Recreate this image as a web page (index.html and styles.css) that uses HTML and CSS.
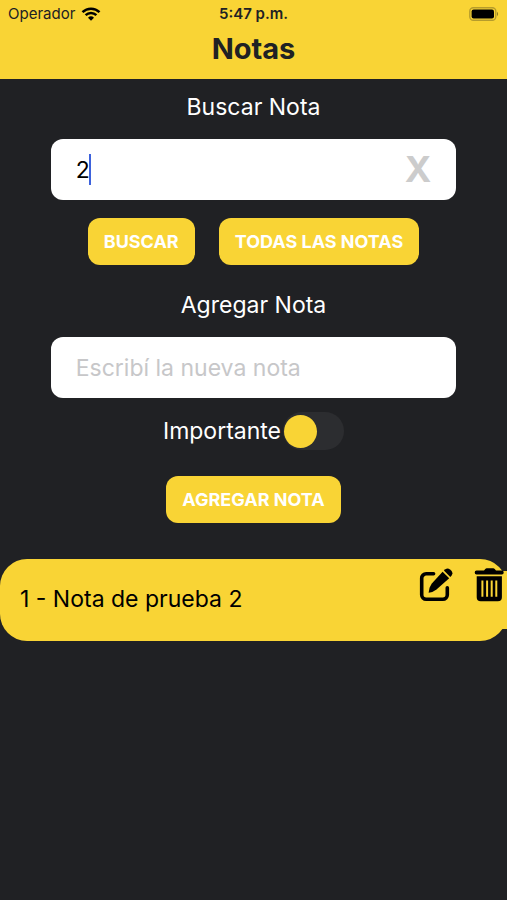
FILE: index.html
```html
<!DOCTYPE html>
<html lang="es">
<head>
<meta charset="utf-8">
<meta name="viewport" content="width=device-width, initial-scale=1">
<title>Notas</title>
<link rel="stylesheet" href="styles.css">
</head>
<body>
<header class="header">
  <div class="status">
    <div class="carrier">
      <span>Operador</span>
      <svg class="wifi" viewBox="0 0 20 14" aria-hidden="true">
        <path d="M1.5 5.2a12.2 12.2 0 0 1 17 0M4.6 8.2a7.8 7.8 0 0 1 10.8 0" fill="none" stroke="currentColor" stroke-width="2.5"/>
        <path d="M7 10.7a4.3 4.3 0 0 1 6 0L10 13.8z" fill="currentColor"/>
      </svg>
    </div>
    <time class="clock">5:47 p.m.</time>
    <svg class="battery" viewBox="0 0 30 14" aria-hidden="true">
      <rect x="0.8" y="0.8" width="26" height="12.4" rx="3.5" fill="none" stroke="#b69c2c" stroke-width="1.4"/>
      <rect x="2.6" y="2.5" width="22.4" height="9" rx="2" fill="#000"/>
      <path d="M28 4.8q2.2 2.2 0 4.4z" fill="#8e7a24"/>
    </svg>
  </div>
  <h1 class="title">Notas</h1>
</header>
<main>
  <form class="form">
    <label class="label" for="search">Buscar Nota</label>
    <div class="field">
      <input class="input" id="search" type="text" value="2">
      <span class="caret"></span>
      <button class="clear" type="button" aria-label="Borrar búsqueda">X</button>
    </div>
    <div class="actions">
      <button class="button" type="button">BUSCAR</button>
      <button class="button" type="button">TODAS LAS NOTAS</button>
    </div>
  </form>
  <form class="form form-add">
    <label class="label" for="note">Agregar Nota</label>
    <div class="field">
      <input class="input" id="note" type="text" placeholder="Escribí la nueva nota">
    </div>
    <div class="important">
      <label for="important">Importante</label>
      <input class="switch" id="important" type="checkbox" role="switch">
    </div>
    <button class="button" type="button">AGREGAR NOTA</button>
  </form>
  <ul class="notes">
    <li class="note">
      <p class="note-text">1 - Nota de prueba 2</p>
      <button class="icon-button" type="button" aria-label="Editar nota">
        <svg class="icon" viewBox="0 0 34 34" aria-hidden="true">
          <path d="M14.6 5.8H7.2a4.5 4.5 0 0 0-4.5 4.5v16.4a4.5 4.5 0 0 0 4.5 4.5h16.6a4.5 4.5 0 0 0 4.5-4.5V19.8" fill="none" stroke="currentColor" stroke-width="3.6" stroke-linecap="round"/>
          <path d="M23.6 3.7 30.2 10.3 17.5 21.6Q14.5 24.2 9.6 24.8 10 19.4 12.6 15.7z" fill="currentColor"/>
          <path d="M24.9 2.5 26.4 1.2q2.2-1.7 4.6.2l1.4 1.4q1.9 2.3.2 4.6L31.3 9z" fill="currentColor"/>
        </svg>
      </button>
      <button class="icon-button icon-button-delete" type="button" aria-label="Eliminar nota">
        <svg class="icon" viewBox="0 0 34 34" aria-hidden="true">
          <path d="M3.5 2.5H11l1.3-1.6Q12.9.2 13.8.2h6.4q.9 0 1.5.7L23 2.5h5.9q1.8 0 1.8 2t-1.8 2H3.5q-1.8 0-1.8-2t1.8-2z" fill="currentColor"/>
          <path fill-rule="evenodd" d="M3.7 8.3h25.2v21q0 4-4 4H7.7q-4 0-4-4zM8.4 12.6v16.2h2V12.6zM13.1 12.6v16.2h2V12.6zM17.7 12.6v16.2h2V12.6zM22.3 12.6v16.2h2V12.6z" fill="currentColor"/>
        </svg>
      </button>
    </li>
  </ul>
</main>
</body>
</html>
```
FILE: styles.css
```css
* {
  box-sizing: border-box;
}

body {
  margin: 0;
  min-height: 100vh;
  background: #202124;
  color: #fff;
  font: 23px/32px Inter, "Liberation Sans", sans-serif;
  overflow-x: hidden;
}

button,
input {
  font: inherit;
  margin: 0;
}

button {
  border: 0;
  cursor: pointer;
}

.header {
  padding: 4px 8px 12px;
  background: #f9d435;
  color: #202124;
}

.status {
  display: grid;
  grid-template-columns: 1fr auto 1fr;
  align-items: center;
  font-size: 14px;
  line-height: 20px;
}

.carrier {
  display: flex;
  align-items: center;
  gap: 6px;
  font-size: 15px;
}

.wifi {
  width: 20px;
  height: 14px;
  color: #000;
}

.clock {
  font-size: 15px;
  font-weight: 600;
}

.battery {
  width: 30px;
  height: 14px;
  justify-self: end;
}

.title {
  margin: 7px 0 0;
  font-size: 29px;
  line-height: 36px;
  font-weight: 700;
  text-align: center;
}

.form {
  display: flex;
  flex-direction: column;
  align-items: center;
  padding-top: 12px;
}

.form-add {
  padding-top: 24px;
}

.label {
  margin-bottom: 16px;
}

.field {
  position: relative;
  width: 80%;
}

.input {
  display: block;
  width: 100%;
  height: 61px;
  padding: 0 25px;
  border: 0;
  border-radius: 12px;
  background: #fff;
  color: #000;
  outline: 0;
}

.input::placeholder {
  color: #c7c7c9;
  opacity: 1;
}

.caret {
  position: absolute;
  top: 15px;
  left: 38px;
  width: 2px;
  height: 31px;
  background: #3d62dc;
}

.clear {
  position: absolute;
  top: 8px;
  right: 19px;
  padding: 6px;
  background: none;
  color: #ccc;
  font-size: 36px;
  font-weight: 700;
}

.actions {
  display: flex;
  gap: 24px;
  margin-top: 18px;
}

.button {
  height: 47px;
  padding: 0 16px;
  border-radius: 12px;
  background: #f9d435;
  color: #fff;
  font-size: 18px;
  font-weight: 700;
}

.important {
  display: flex;
  align-items: center;
  gap: 2px;
  margin: 14px 0 26px;
}

.switch {
  appearance: none;
  display: flex;
  align-items: center;
  width: 61px;
  height: 38px;
  padding: 0 1px;
  border-radius: 19px;
  background: #2c2d30;
}

.switch::before {
  content: "";
  width: 33px;
  height: 33px;
  border-radius: 50%;
  background: #f9d435;
}

.switch:checked {
  justify-content: flex-end;
}

.notes {
  margin: 36px 0 0;
  padding: 0;
  list-style: none;
}

.note {
  display: flex;
  align-items: flex-start;
  gap: 20px;
  min-height: 82px;
  padding: 9px 0 11px 20px;
  border-radius: 27px;
  background: #f9d435;
  color: #000;
}

.note-text {
  flex: 1;
  margin: 15px 0 0;
}

.icon-button {
  padding: 0;
  background: none;
  color: #000;
  line-height: 0;
}

.icon-button-delete {
  position: relative;
  width: 34px;
}

.icon-button-delete::before {
  content: "";
  position: absolute;
  top: 3px;
  right: 0;
  width: 34px;
  height: 58px;
  background: #f9d435;
}

.icon {
  position: relative;
  width: 34px;
  height: 34px;
}
```
